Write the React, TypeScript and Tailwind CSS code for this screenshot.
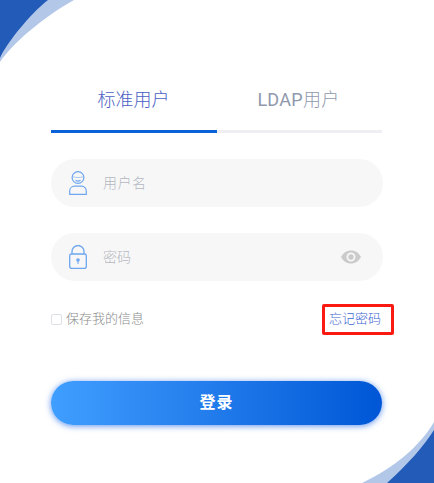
import React from "react";

function UserIcon() {
  return (
    <svg width="18" height="24" viewBox="0 0 18 24" fill="none" stroke="#6ea6f0" strokeWidth="1.2">
      <circle cx="9" cy="6.500" r="5.900" />
      <path d="M4 5.800c1.500.5 3 .7 5 .7s3.500-.2 5-.7" strokeWidth="0.800" strokeOpacity="0.700" />
      <path d="M6.500 9.200c1.200.8 3.800.8 5 0" strokeWidth="1.200" />
      <path d="M.7 23.400h16.600v-3.400c0-2.700-2-4.800-4.800-4.800h-7C2.700 15.200.7 17.300.7 20z" strokeLinejoin="round" />
    </svg>
  );
}

function LockIcon() {
  return (
    <svg width="18" height="24" viewBox="0 0 18 24" fill="none" stroke="#6ea6f0" strokeWidth="1.300">
      <path d="M3 9V6.500a6 6 0 0 1 12 0V9" />
      <rect x=".7" y="9" width="16.600" height="14.400" rx="1.800" />
      <circle cx="9" cy="15" r="1.800" fill="#6ea6f0" stroke="none" />
      <path d="M9 15v4" strokeWidth="1" />
    </svg>
  );
}

function EyeIcon() {
  return (
    <svg width="20" height="14" viewBox="0 0 20 14" fill="#cbcbcb">
      <path fillRule="evenodd" d="M10 .5C5.500.5 1.800 3.200 0 7c1.800 3.800 5.500 6.500 10 6.500S18.200 10.800 20 7C18.200 3.200 14.500.5 10 .5zM10 11.500a4.500 4.500 0 1 1 0-9 4.500 4.500 0 0 1 0 9z" />
      <circle cx="10" cy="7" r="2.700" />
    </svg>
  );
}

export default function App() {
  return (
    <div className="relative h-[483px] w-[434px] overflow-hidden bg-white font-['Roboto','Noto_Sans_CJK_SC',sans-serif] font-light">
      <svg className="absolute left-0 top-0" width="74" height="62" viewBox="0 0 74 62">
        <path d="M0 62C12 44 42 18 74 0H0z" fill="#b3c8e9" />
        <path d="M0 58C6 44 30 14 48 0H0z" fill="#225cb8" />
      </svg>
      <svg className="absolute bottom-0 right-0" width="72" height="61" viewBox="0 0 72 61">
        <path d="M72 0C58 24 32 46 0 61H72z" fill="#b3c8e9" />
        <path d="M72 8C62 24 46 42 25 61H72z" fill="#225cb8" />
      </svg>

      <div className="px-[51px] pt-[86px]">
        <div className="flex w-[331px] border-b-[3px] border-[#eeeef3]">
          <div className="-mb-[3px] flex h-[47px] w-[166px] items-start justify-center border-b-[3px] border-[#0a62d8] pr-[1px] text-[18px] leading-[28px] text-[#4a60c4]">
            标准用户
          </div>
          <div className="flex h-[44px] w-[165px] items-start justify-center pr-[2px] text-[18px] leading-[28px] tracking-[0.3px] text-[#8f99ad]">
            <span className="font-normal">LDAP</span>用户
          </div>
        </div>

        <div className="mt-[26px] flex h-[48px] w-[332px] items-center rounded-[24px] bg-[#f7f7f7] pl-[18px] text-[14px] text-[#b4b8c1]">
          <UserIcon />
          <span className="ml-[16px] tracking-[0.5px]">用户名</span>
        </div>

        <div className="mt-[26px] flex h-[48px] w-[332px] items-center rounded-[24px] bg-[#f7f7f7] pl-[18px] pr-[22px] text-[14px] text-[#b4b8c1]">
          <LockIcon />
          <span className="ml-[16px] flex-1">密码</span>
          <EyeIcon />
        </div>

        <div className="mt-[23px] flex h-[31px] w-[343px] items-center justify-between">
          <div className="-mt-[2px] flex items-center text-[13px] text-[#8a8a8a]">
            <span className="mr-[4px] mt-[2px] h-[11px] w-[11px] rounded-[2px] border border-[#dcdfe6]" />
            保存我的信息
          </div>
          <div className="flex h-[31px] w-[72px] items-center rounded-[2px] border-[3px] border-[#fa1a12] pb-[1px] pl-[4px] text-[13px] text-[#3c66d0]">
            忘记密码
          </div>
        </div>

        <button className="mt-[46px] flex h-[44px] w-[331px] items-center justify-center rounded-[22px] bg-gradient-to-r from-[#409eff] to-[#0056d6] text-[16px] font-bold tracking-[1px] text-white shadow-[0_1px_6px_rgba(30,100,230,0.7)]">
          登录
        </button>
      </div>
    </div>
  );
}
